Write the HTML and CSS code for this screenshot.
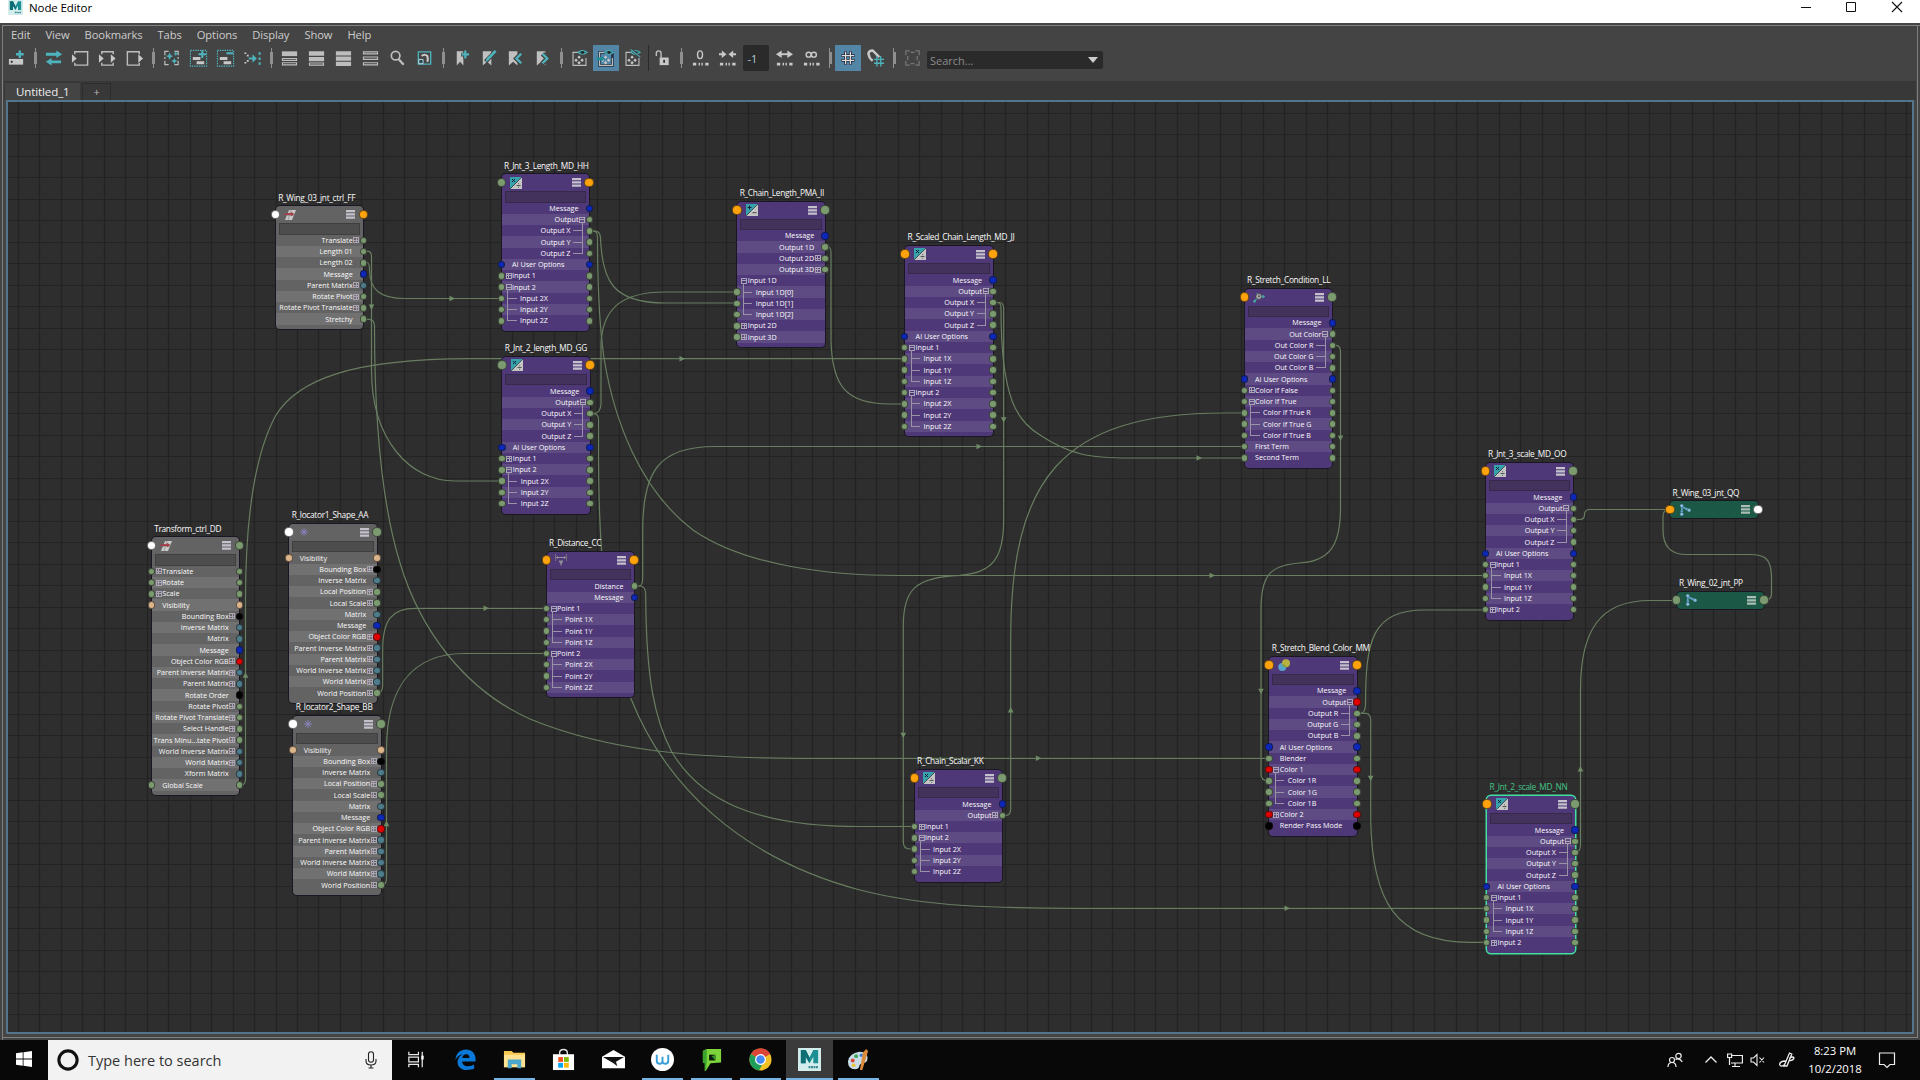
FILE: index.html
```html
<!DOCTYPE html>
<html lang="en">
<head>
<meta charset="utf-8">
<title>Node Editor</title>
<link rel="stylesheet" href="styles.css">
</head>
<body>
<svg class="defs" width="0" height="0" aria-hidden="true">
  <defs>
    <symbol id="n-md" viewBox="0 0 12 12"><path d="M0 0H12V12H0z" fill="#c4c4c4"/><path d="M0 0H12L0 12z" fill="#36a3ac"/><path d="M12 0L0 12" stroke="#333" stroke-width=".8"/><path d="M2 2l3 3M5 2L2 5" stroke="#123" stroke-width="1"/><path d="M6.5 8.5h4M8.6 6.3v.9M8.6 9.8v.9" stroke="#555" stroke-width="1"/></symbol>
    <symbol id="n-pma" viewBox="0 0 12 12"><path d="M0 0H12V12H0z" fill="#c4c4c4"/><path d="M0 0H12L0 12z" fill="#36a3ac"/><path d="M12 0L0 12" stroke="#333" stroke-width=".8"/><path d="M1.5 3.5h4M3.5 1.5v4" stroke="#123" stroke-width="1"/><path d="M6.5 8.7h4" stroke="#444" stroke-width="1"/></symbol>
    <symbol id="n-xf" viewBox="0 0 12 12"><path d="M5 1h7L8 11H1z" fill="#c9c9c9"/><path d="M7 1l-3 10M2.8 6.5h7" stroke="#8a8a8a" stroke-width=".7"/><path d="M0 5l4-1 3 .2V2.8L10.5 5 7 7.3V6L0 6z" fill="#a63c46"/></symbol>
    <symbol id="n-loc" viewBox="0 0 12 12"><path d="M6 2v8M2 6h8M3.2 3.2l5.6 5.6M8.8 3.2L3.2 8.8" stroke="#8c86c4" stroke-width=".9"/></symbol>
    <symbol id="n-dist" viewBox="0 0 12 12"><path d="M.5 0v7M11.500 0v7" stroke="#777" stroke-width=".9"/><path d="M1.500 3.500h9" stroke="#aaa" stroke-width=".8"/><path d="M1 3.500l2-1.500v3zM11 3.500l-2-1.500v3z" fill="#999"/><path d="M4 6.500h4v2H7l-.5 3h-1L5 8.500H4z" fill="#8d8d95"/></symbol>
    <symbol id="n-cond" viewBox="0 0 12 12"><path d="M1 11L5 6 4 2M5.500 6l6-.5" stroke="#4b9c9f" stroke-width="1.300" fill="none"/><circle cx="5.800" cy="5.500" r="2.900" fill="#a9a9ae" stroke="#333" stroke-width=".6"/><circle cx="6" cy="5.300" r="1" fill="#555"/><circle cx="1.500" cy="10.300" r="1.300" fill="#4aa"/><path d="M9.500 3.500l2.500 2-2.500 2z" fill="#4aa"/></symbol>
    <symbol id="n-blend" viewBox="0 0 12 12"><circle cx="4.300" cy="8" r="4" fill="#56a3cc"/><circle cx="8" cy="4.200" r="4" fill="#b9b240"/><path d="M4.200 5.200a4 4 0 0 1 4 3.200 4 4 0 0 1-4-3.200z" fill="#7d9a4c"/></symbol>
    <symbol id="n-joint" viewBox="0 0 13 13"><path d="M3 2v9M3 3l8 4" stroke="#5f9fc0" stroke-width="1.800"/><path d="M3 4l-1.500 5h3zM4 3l5 4.300L10 5z" fill="#5f9fc0"/><g fill="#8fc2e0" stroke="#2b5a72" stroke-width=".5"><circle cx="3" cy="2" r="1.900"/><circle cx="3" cy="11" r="1.900"/><circle cx="11" cy="6.800" r="1.900"/></g></symbol>
    <symbol id="n-bars" viewBox="0 0 9 9"><path d="M0 0h9v2.300H0zM0 3.300h9v2.300H0zM0 6.600h9v2.200H0z" fill="currentColor"/></symbol>
    <symbol id="i-eyebox" viewBox="0 0 22 22"><path d="M12 4.500H3.500V19.500H18.500V11" fill="none" stroke="#bdbdbd" stroke-width="1.300"/><path d="M10.500 8l2 2-2 2-2-2zM7 11.500l2 2-2 2-2-2zM14 11.500l2 2-2 2-2-2zM10.500 14.500l2 2-2 2-2-2z" fill="#c8c8c8"/><path d="M9 4.500Q14 0 20 4.500Q14 9 9 4.500z" fill="#2f6f76" stroke="#4fb0b8" stroke-width="1.200"/><circle cx="14.500" cy="4.500" r="1.700" fill="#222"/></symbol>
    <symbol id="i-dots" viewBox="0 0 20 20"><path d="M2 16.500h3.500M8 16.500h1.500M11 16.500h1.500M15 16.500h3.500" stroke="#c8c8c8" stroke-width="3"/></symbol>
    <symbol id="i-maya" viewBox="0 0 24 24"><path d="M0 0H24V24H0z" fill="#d3ecec"/><path d="M3 2h5l4 8 4-8h5v14h-5V9l-4 7-4-7v7H3z" fill="#1b8f93"/><path d="M3 2h5l4 8v6L8 9v7H3z" fill="#0f6d74"/><path d="M11 20h10" stroke="#3a8b90" stroke-width="2.500" stroke-dasharray="2 .6"/></symbol>
  </defs>
</svg>

<header class="titlebar">
  <svg class="titlebar-logo" viewBox="0 0 24 24"><use href="#i-maya"/></svg>
  <span class="titlebar-text">Node Editor</span>
  <div class="window-buttons">
    <svg viewBox="0 0 12 12"><path d="M1 6.500h10" stroke="#111"/></svg>
    <svg viewBox="0 0 12 12"><path d="M1.500 1.500h9v9h-9z" fill="none" stroke="#111"/></svg>
    <svg viewBox="0 0 12 12"><path d="M1 1l10 10M11 1L1 11" stroke="#111" stroke-width="1.100"/></svg>
  </div>
</header>

<main class="window">
  <nav class="menubar"><span>Edit</span><span>View</span><span>Bookmarks</span><span>Tabs</span><span>Options</span><span>Display</span><span>Show</span><span>Help</span></nav>

  <div class="toolbar">
    <svg class="tool" viewBox="0 0 20 20"><path d="M2 11h15v6H2z" fill="#c8c8c8"/><circle cx="5" cy="14" r="1.200" fill="#333"/><path d="M13.500 1.500v9M9 6h9" stroke="#444" stroke-width="4.500"/><path d="M13.500 2v8M9.500 6h8" stroke="#4db3bd" stroke-width="2.500"/></svg>
    <i class="sep"></i>
    <svg class="tool" viewBox="0 0 20 20"><path d="M2 4.500h11V2l6 4-6 4V7.500H2zM18 12.500H8V10l-6 4 6 4v-2.500h10z" fill="#4db3bd"/></svg>
    <svg class="tool" viewBox="0 0 20 20"><path d="M4 6V3.500H17.500V17.500H4V15" fill="none" stroke="#bdbdbd" stroke-width="1.500"/><path d="M1 6l5 4.500L1 15z" fill="#c8c8c8"/></svg>
    <svg class="tool" viewBox="0 0 20 20"><path d="M4 6V3.500H16V6M4 15v2.500H16V15" fill="none" stroke="#bdbdbd" stroke-width="1.500"/><path d="M1 6l5 4.500L1 15zM13.500 6l5 4.500-5 4.500z" fill="#c8c8c8"/></svg>
    <svg class="tool" viewBox="0 0 20 20"><path d="M15 6V3.500H2.500V17.500H15V15" fill="none" stroke="#bdbdbd" stroke-width="1.500"/><path d="M14 6l5 4.500-5 4.500z" fill="#c8c8c8"/></svg>
    <i class="sep"></i>
    <svg class="tool" viewBox="0 0 20 20"><path d="M7 3H3V7M13 3h4v4M3 13v4h4M17 13v4h-4M3 9v2M17 9v2" fill="none" stroke="#bdbdbd" stroke-width="1.300"/><path d="M8 4l1.200 3L12 8 9.200 9.200 8 12 6.800 9.200 4 8l2.800-1zM13 10l1 2.200 2.200 1-2.200 1L13 16.500l-1-2.300-2.200-1 2.200-1zM14.500 3l.8 1.700 1.700.8-1.700.8-.8 1.700-.8-1.700L12 5.500l1.700-.8z" fill="#4db3bd"/></svg>
    <svg class="tool" viewBox="0 0 20 20"><path d="M1.500 2H18.500V18.500H1.500z" fill="none" stroke="#4db3bd" stroke-width="1.200" stroke-dasharray="1.500 1"/><path d="M4 9h8v3H4zM8 13.500h8v3H8z" fill="#c8c8c8"/><path d="M14 2v8M10 6h8" stroke="#4db3bd" stroke-width="2.200"/></svg>
    <svg class="tool" viewBox="0 0 20 20"><path d="M1.500 2H18.500V18.500H1.500z" fill="none" stroke="#4db3bd" stroke-width="1.200" stroke-dasharray="1.500 1"/><path d="M4 9h8v3H4zM8 13.500h8v3H8z" fill="#c8c8c8"/><path d="M11 5h7" stroke="#4db3bd" stroke-width="2.200"/></svg>
    <svg class="tool" viewBox="0 0 20 20"><path d="M1.500 5h2M1.500 15h2M4 7.500h2M4 13h2" stroke="#c8c8c8" stroke-width="1.700"/><path d="M6 10.500h7" stroke="#4db3bd" stroke-width="2"/><path d="M10 6l4.500 4.500L10 15z" fill="#4db3bd"/><path d="M17.500 4v2.500M17.500 9.500V12M17.500 14.500V17" stroke="#4db3bd" stroke-width="2.200"/></svg>
    <i class="sep"></i>
    <svg class="tool" viewBox="0 0 20 20"><path d="M2 3h16v5H2z" fill="#bdbdbd"/><path d="M2.600 10.500h14.800v2H2.600zM2.600 15h14.800v2.300H2.600z" fill="none" stroke="#bdbdbd" stroke-width="1.200"/></svg>
    <svg class="tool" viewBox="0 0 20 20"><path d="M2 3h16v4.500H2zM2 9h16v4.500H2z" fill="#bdbdbd"/><path d="M2.600 15.300h14.800v2.200H2.600z" fill="none" stroke="#bdbdbd" stroke-width="1.200"/></svg>
    <svg class="tool" viewBox="0 0 20 20"><path d="M2 3h16v4.300H2zM2 8.500h16v4.300H2zM2 14h16v4.300H2z" fill="#bdbdbd"/></svg>
    <svg class="tool" viewBox="0 0 20 20"><path d="M2.600 3.600h14.800v2H2.600zM2.600 9h14.800v2.500H2.600zM2.600 15h14.800v2.300H2.600z" fill="none" stroke="#bdbdbd" stroke-width="1.200"/></svg>
    <svg class="tool" viewBox="0 0 20 20"><circle cx="8" cy="7.500" r="4.500" fill="none" stroke="#bdbdbd" stroke-width="1.800"/><path d="M11 11l5.500 6" stroke="#bdbdbd" stroke-width="2.400"/></svg>
    <svg class="tool" viewBox="0 0 20 20"><path d="M3.500 3.500h13v13h-13z" fill="none" stroke="#4db3bd" stroke-width="1.400"/><path d="M4 11.500h4.500V16H4z" fill="#2b4a4d" stroke="#bde" stroke-width="1"/><path d="M7 8q3-3 6 0 1 3 0 6" fill="none" stroke="#c8c8c8" stroke-width="2.200"/></svg>
    <i class="sep"></i>
    <svg class="tool" viewBox="0 0 20 20"><path d="M5 3h7v15l-3.500-4L5 18z" fill="#c0c0c0"/><path d="M14 2v9M9.500 6.500h9" stroke="#444" stroke-width="4"/><path d="M14 2v8.500M10 6.200h8" stroke="#4db3bd" stroke-width="2.300"/></svg>
    <svg class="tool" viewBox="0 0 20 20"><path d="M4 3h9v15l-4.500-4L4 18z" fill="#c0c0c0"/><path d="M17.500 2.500L7 14" stroke="#444" stroke-width="4.500"/><path d="M17.500 2.500L8.500 12" stroke="#4db3bd" stroke-width="2.800"/><path d="M8 11l2 2-3.500 1.500z" fill="#4db3bd"/></svg>
    <svg class="tool" viewBox="0 0 20 20"><path d="M3 3h9v15l-4.500-4L3 18z" fill="#c0c0c0"/><path d="M16 5.500l-5 5 5 5" fill="none" stroke="#444" stroke-width="5"/><path d="M16 5.500l-5 5 5 5" fill="none" stroke="#4db3bd" stroke-width="2.500"/></svg>
    <svg class="tool" viewBox="0 0 20 20"><path d="M4 3h9v15l-4.500-4L4 18z" fill="#c0c0c0"/><path d="M10 5.500l5 5-5 5" fill="none" stroke="#444" stroke-width="5"/><path d="M10 5.500l5 5-5 5" fill="none" stroke="#4db3bd" stroke-width="2.500"/></svg>
    <i class="sep"></i>
    <svg class="tool" viewBox="0 0 22 22"><use href="#i-eyebox"/></svg>
    <svg class="tool tool-on" viewBox="0 0 22 22"><path d="M3.500 4.500h15v15h-15z" fill="none" stroke="#234" stroke-width="3"/><use href="#i-eyebox"/><path d="M0 12h8" stroke="#1d8e96" stroke-width="3"/><circle cx="6" cy="12" r="2.500" fill="#1d8e96"/></svg>
    <svg class="tool" viewBox="0 0 22 22"><use href="#i-eyebox"/><path d="M9 0l10 9" stroke="#444" stroke-width="2.500"/><path d="M9 1l11 9" stroke="#4db3bd" stroke-width="1.200"/></svg>
    <i class="sep-thin"></i>
    <svg class="tool" viewBox="0 0 20 20"><path d="M3.500 8V5q0-2.500 2.500-2.500T8.500 5v5" fill="none" stroke="#bdbdbd" stroke-width="1.500"/><path d="M7 9.500h9.500v8H7z" fill="#c8c8c8"/><path d="M11.700 12v3" stroke="#333" stroke-width="2"/></svg>
    <i class="sep sep-wide"></i>
    <svg class="tool" viewBox="0 0 20 20"><ellipse cx="9.500" cy="6.500" rx="2.600" ry="4" fill="none" stroke="#c8c8c8" stroke-width="1.500"/><use href="#i-dots"/></svg>
    <svg class="tool" viewBox="0 0 20 20"><path d="M1 6h4M15 6h4" stroke="#c8c8c8" stroke-width="2"/><path d="M4 2l5 4-5 4zM16 2l-5 4 5 4z" fill="#c8c8c8"/><use href="#i-dots"/></svg>
    <span class="depth">-1</span>
    <svg class="tool" viewBox="0 0 20 20"><path d="M5 6h10" stroke="#c8c8c8" stroke-width="2"/><path d="M7 2L1 6l6 4zM13 2l6 4-6 4z" fill="#c8c8c8"/><use href="#i-dots"/></svg>
    <svg class="tool" viewBox="0 0 20 20"><circle cx="7" cy="6.500" r="2.600" fill="none" stroke="#c8c8c8" stroke-width="1.500"/><circle cx="12.500" cy="6.500" r="2.600" fill="none" stroke="#c8c8c8" stroke-width="1.500"/><use href="#i-dots"/></svg>
    <i class="sep"></i>
    <svg class="tool tool-on" viewBox="0 0 20 20"><path d="M7.500 3v14M12.500 3v14M3 7.500h14M3 12.500h14" stroke="#223" stroke-width="2.800"/><path d="M7.500 3.500v13M12.500 3.500v13M3.500 7.500h13M3.500 12.500h13" stroke="#ddd" stroke-width="1.300"/></svg>
    <svg class="tool tool-snap" viewBox="0 0 20 20"><path d="M4 10L2.500 5.500Q3 2 7 2l7 7M4 10l3 3" fill="none" stroke="#c8c8c8" stroke-width="2.600"/><path d="M11.500 8v11M15.500 8v11M8.500 11.500H19M8.500 15.500H19" stroke="#4db3bd" stroke-width="1.400"/></svg>
    <i class="sep"></i>
    <svg class="tool" viewBox="0 0 20 20"><path d="M7 2.500H3V7M13 2.500h4V7M3 13v4.500h4M17 13v4.500h-4M5 8v4M15 8v4M8 4h4M8 16h4" fill="none" stroke="#777" stroke-width="1.300"/></svg>
    <div class="search"><span>Search...</span><i class="caret"></i></div>
  </div>

  <div class="tabs"><span class="tab tab-active">Untitled_1</span><span class="tab tab-add">+</span></div>

  <section class="canvas" id="canvas">
    <svg class="wires" id="wires" viewBox="8 102 1906 930"></svg>
  </section>
</main>

<footer class="taskbar">
  <span class="task start"><svg viewBox="0 0 16 16"><path d="M0 2.200L6.700 1.300V7.600H0zM7.500 1.200L16 0V7.600H7.500zM0 8.400H6.700V14.700L0 13.800zM7.500 8.400H16V16L7.500 14.800z" fill="#fff"/></svg></span>
  <div class="cortana">
    <svg class="cortana-ring" viewBox="0 0 20 20"><circle cx="10" cy="10" r="8.300" fill="none" stroke="#111" stroke-width="2.800"/></svg>
    <span>Type here to search</span>
    <svg class="cortana-mic" viewBox="0 0 12 18"><rect x="3.500" y=".7" width="5" height="10.500" rx="2.500" fill="none" stroke="#222" stroke-width="1.100"/><path d="M1 8v2q0 4 5 4t5-4V8M6 14v3M3.500 17h5" fill="none" stroke="#222" stroke-width="1.100"/></svg>
  </div>
  <span class="task"><svg viewBox="0 0 24 24"><path d="M4 4v3h10V4M4 20v-3h10v3M4 9.500h10v5H4zM18 4v16" fill="none" stroke="#e8e8e8" stroke-width="1.300"/><path d="M17 8h2.500v4H17z" fill="#fff"/></svg></span>
  <span class="task"><svg viewBox="0 0 24 24"><path d="M1.500 12.500C2 5 7 1.500 12.500 1.500 19 1.500 22.500 6 22.500 11.500V14H8.500c.3 3.500 3 5 6.300 5 2.400 0 4.500-.6 6.200-1.700v4.200c-2 1-4.500 1.500-7.200 1.500C7 23 3.200 19 3.800 13.500 4.200 10 6.500 7.500 9.500 6.500 6 6.800 3 9 1.500 12.500zM8.700 10.500h7.500C16.200 8 15 6.500 12.700 6.500 10.500 6.500 9 8 8.700 10.500z" fill="#0a78d7"/></svg></span>
  <span class="task task-run"><svg viewBox="0 0 24 24"><path d="M1 3h8l2 2h12v15H1z" fill="#f5c94f"/><path d="M1 7h22v13H1z" fill="#fde391"/><path d="M5 12h14v9h-4v-4H9v4H5z" fill="#4aa8cf"/></svg></span>
  <span class="task"><svg viewBox="0 0 24 24"><path d="M8 7V5q0-3.500 4-3.500T16 5v2" fill="none" stroke="#ddd" stroke-width="1.500"/><path d="M1 6.500h22V23H1z" fill="#fff"/><path d="M6.500 9.500h5v5h-5z" fill="#f25022"/><path d="M12.500 9.500h5v5h-5z" fill="#7fba00"/><path d="M6.500 15.500h5v5h-5z" fill="#00a4ef"/><path d="M12.500 15.500h5v5h-5z" fill="#ffb900"/></svg></span>
  <span class="task"><svg viewBox="0 0 24 24"><path d="M0 9L12 2l12 7v12H0z" fill="#fff"/><path d="M1 9.500h22L12 16z" fill="#111"/><path d="M12 16l4 3-1.500-5z" fill="#111"/></svg></span>
  <span class="task task-run"><svg viewBox="0 0 24 24"><circle cx="12" cy="12" r="12" fill="#fff"/><path d="M6 7v6q0 3.500 3 3.500t3-3V9M12 13.500q0 3 3 3t3-3.500V7" fill="none" stroke="#3a9fd8" stroke-width="2"/></svg></span>
  <span class="task task-run"><svg viewBox="0 0 24 24"><path d="M3 3L7 1H22v14l-11 1-5 8H5V16L3 15z" fill="#7ed33a"/><path d="M3 3l4-2v14l-1 9H5v-8l-2-1z" fill="#3aa42e"/><path d="M9.500 7h6.500v6H9.500z" fill="#0b1a0b"/><path d="M12 8.500l4-1.500v6z" fill="#2f8f2a"/></svg></span>
  <span class="task task-run"><svg viewBox="0 0 24 24"><circle cx="12" cy="12" r="11.500" fill="#f2bf26"/><path d="M12 12L2 6.300A11.500 11.500 0 0 1 22 6.300z" fill="#dc4437"/><path d="M12 12L2 6.300A11.500 11.500 0 0 0 10.500 23.400l4.700-9z" fill="#1e9e58"/><path d="M12 6.300h10A11.500 11.500 0 0 0 12 .5z" fill="#dc4437"/><circle cx="12" cy="12" r="5.700" fill="#fff"/><circle cx="12" cy="12" r="4.400" fill="#4587f3"/></svg></span>
  <span class="task task-run task-active"><svg viewBox="0 0 24 24"><use href="#i-maya"/></svg></span>
  <span class="task task-run"><svg viewBox="0 0 24 24"><path d="M13 4Q2 6 1 14q0 9 9 8 3-1 3-4 1-2 4-2 6-2 4-8-2-4-8-4z" fill="#c9dce8"/><circle cx="6" cy="13" r="2" fill="#d9442f"/><circle cx="9.500" cy="8.500" r="2" fill="#3aa655"/><circle cx="15" cy="7.500" r="1.800" fill="#3a7bd5"/><circle cx="7" cy="18" r="1.900" fill="#efc431"/><path d="M20 1l2 2-6 20h-2.500l3-18z" fill="#d98a3a"/></svg></span>
  <div class="tray">
    <svg viewBox="0 0 16 16"><g fill="none" stroke="#eee" stroke-width="1.200"><circle cx="11.500" cy="4" r="2.700"/><path d="M8.500 7.500Q12.500 5.500 15.300 10"/><circle cx="5" cy="8" r="2.500"/><path d="M1 15q0-4.500 4-4.500T9 15"/></g></svg>
    <svg class="tray-chevron" viewBox="0 0 16 16"><path d="M2.500 10.500L8 5l5.500 5.500" fill="none" stroke="#eee" stroke-width="1.300"/></svg>
    <svg viewBox="0 0 16 16"><path d="M4 3.500h11.400v7.500H4M8 11v3M5 14.500h8" fill="none" stroke="#eee" stroke-width="1.200"/><path d="M.6 2h4v3.500h-4zM2.500 5.500V13" fill="none" stroke="#eee" stroke-width="1.200"/></svg>
    <svg class="tray-volume" viewBox="0 0 16 16"><path d="M1 6h2.500L7 2.500v11L3.500 10H1zM9.500 5.500l4.500 5M14 5.500l-4.500 5" fill="none" stroke="#eee" stroke-width="1.100"/></svg>
    <svg class="tray-pen" viewBox="0 0 16 16"><path d="M5 14L10.500 1l2.300 1L8 14zM10 6q5-2 5 0-1 3-5 2.500M6.500 9Q1 9 .6 12.500 2 15.500 5 13" fill="none" stroke="#eee" stroke-width="1.300"/></svg>
    <div class="clock"><span>8:23 PM</span><span>10/2/2018</span></div>
    <svg class="tray-note" viewBox="0 0 18 18"><path d="M1.500 2h15v11.500H12L9 16.500l-3-3H1.500z" fill="none" stroke="#eee" stroke-width="1.200"/></svg>
  </div>
</footer>
<script src="app.js"></script>
</body>
</html>
```
FILE: styles.css
```css
* { box-sizing: border-box; }
body {
  margin: 0;
  width: 1920px;
  height: 1080px;
  overflow: hidden;
  display: flex;
  flex-direction: column;
  background: #444;
  font-family: "Open Sans", "Noto Sans", sans-serif;
}
.defs { position: absolute; }

.titlebar {
  height: 23px;
  flex: none;
  display: flex;
  align-items: flex-start;
  background: #fff;
  padding-left: 8px;
}
.titlebar-logo { width: 15px; height: 15px; }
.titlebar-text { margin-left: 6px; font-size: 11.500px; line-height: 16px; letter-spacing: -.1px; color: #000; }
.window-buttons { margin-left: auto; display: flex; gap: 33.500px; padding: 1px 17.500px 0 0; }
.window-buttons svg { width: 12px; height: 12px; }

.window {
  height: 1017px;
  flex: none;
  display: flex;
  flex-direction: column;
  background: #444;
  padding: 4px 4px 0 3px;
  box-shadow: inset 2px 2px #444, inset 3px 3px #808080, inset -2px -2px #444, inset -3px -3px #808080;
}
.menubar {
  height: 18px;
  display: flex;
  gap: 15px;
  padding-left: 8px;
  font-size: 11.200px;
  letter-spacing: -.1px;
  line-height: 16px;
  color: #ccc;
}
.toolbar { height: 36px; display: flex; align-items: center; padding-bottom: 10px; }
.tool { flex: none; width: 27px; height: 26px; padding: 3.500px; overflow: visible; }
.tool-on { width: 26px; background: #5285a6; }
.tool-snap { margin-left: 1px; }
.sep, .sep-thin { flex: none; position: relative; width: 10px; height: 20px; }
.sep::before, .sep::after { content: ""; position: absolute; left: 4.500px; top: 0; width: 1px; height: 20px; background: #909090; }
.sep::after { left: 4px; width: 3px; top: 4px; height: 12px; }
.sep-wide { width: 11px; }
.sep-thin { width: 3px; height: 26px; }
.sep-thin::before { content: ""; position: absolute; right: 0; top: 0; width: 1px; height: 26px; background: #2a2a2a; }
.sep-thin::after { content: none; }
.depth {
  width: 26px;
  height: 26px;
  margin: 0 2px 0 1.500px;
  padding-left: 5px;
  background: #2a2a2a;
  border-radius: 2px;
  color: #b9cdd8;
  font-size: 11px;
  line-height: 27px;
}
.search {
  display: flex;
  align-items: center;
  justify-content: space-between;
  width: 176px;
  height: 18px;
  margin: 4px 0 0 1.500px;
  padding: 0 5px 0 3px;
  background: #2a2a2a;
  border-radius: 2px;
  color: #8c8c8c;
  font-size: 11px;
}
.caret { border: 5px solid transparent; border-top: 6px solid #ccc; border-bottom: 0; }

.tabs { height: 19px; display: flex; align-items: flex-end; gap: 2px; margin-left: 1px; padding-left: 1px; background: #383838; }
.tab { height: 17px; font-size: 11.500px; letter-spacing: -.1px; line-height: 17px; color: #eee; }
.tab-active { width: 75px; padding-left: 11px; background: #444; }
.tab-add { width: 29px; text-align: center; font-size: 11px; border: 1px solid #2c2c2c; border-bottom: 0; line-height: 15px; color: #bbb; }

.canvas {
  position: relative;
  width: 1908px;
  height: 934px;
  margin-left: 3px;
  border: 2px solid #54748b;
  background: #2e2e2e;
  overflow: hidden;
}
.wires { display: block; width: 1906px; height: 930px; }
.grid-line { fill: none; stroke: #232323; stroke-width: 1.200; }
.wire { fill: none; stroke: #687d60; stroke-width: 1.200; }
.arrow { fill: #6f8b66; }

/* Nodes are placed freely on the canvas */
.node {
  position: absolute;
  width: 87.500px;
  padding-bottom: 4.500px;
  border-radius: 4px;
  background: var(--dark);
  box-shadow: 0 0 0 1px #1b1722;
  color: #fafafa;
}
.node-purple { --dark: #4f3878; --light: #5e4b84; --field: #43325b; }
.node-gray { --dark: #636363; --light: #717171; --field: #4d4d4d; }
.node-green { --dark: #1b5846; --light: #1b5846; --field: #1b5846; padding-bottom: 0; }
.node-selected { box-shadow: 0 0 0 1.500px #3fe0a0; }
.node-title {
  position: absolute;
  left: 2.500px;
  top: -14.500px;
  font-size: 8.300px;
  letter-spacing: -.3px;
  line-height: 12px;
  white-space: nowrap;
}
.node-selected .node-title { color: #43c487; }
.node-head { position: relative; display: flex; align-items: center; justify-content: space-between; height: 17px; padding: 0 8px 0 8.500px; }
.node-icon { width: 12px; height: 12px; }
.node-bars { width: 9px; height: 9px; color: #c4c0cc; }
.node-green .node-bars { color: #a9bdb5; }
.node-field { height: 11.500px; margin: 0 3px .2px; background: var(--field); border: 1px solid rgba(0, 0, 0, .18); }
.row {
  position: relative;
  display: flex;
  align-items: center;
  height: 11.260px;
  padding: 0 10.500px;
  font-size: 7.200px;
  line-height: 11px;
  white-space: nowrap;
}
.row:nth-child(even) { background: var(--light); }
.row:nth-child(odd) { background: var(--dark); }
.row-out { justify-content: flex-end; }
.row-out.row-child { padding-right: 18.500px; }
.row-in.row-child { padding-left: 18.500px; }
.row-child::before { content: ""; position: absolute; bottom: 5px; width: 8.500px; height: 11px; border-bottom: 1px solid #9a93a6; }
.row-in.row-child::before { left: 5.500px; border-left: 1px solid #9a93a6; }
.row-out.row-child::before { right: 6.500px; border-right: 1px solid #9a93a6; }
.row-first::before { height: 8.500px; }
.box { position: absolute; top: 2.700px; width: 6px; height: 6px; border: 1px solid #aaa4b4; }
.box::before { content: ""; position: absolute; left: 0; top: 1.500px; width: 4px; height: 1px; background: #aaa4b4; }
.box-plus::after { content: ""; position: absolute; left: 1.500px; top: 0; width: 1px; height: 4px; background: #aaa4b4; }
.row-in .box { left: 4px; }
.row-out .box { right: 4px; }
.port {
  position: absolute;
  top: calc(50% - 3.700px);
  width: 7.400px;
  height: 7.400px;
  border-radius: 50%;
  border: .8px solid rgba(20, 20, 20, .6);
}
.port-l { left: -4px; }
.port-r { right: -4px; }
.port-big { width: 9.600px; height: 9.600px; top: calc(50% - 4.800px); }
.port-big.port-l { left: -5px; }
.port-big.port-r { right: -5px; }
.c-g { background: #7b9a70; }
.c-o { background: #ffa30c; }
.c-w { background: #fff; }
.c-b { background: #0d28b8; }
.c-t { background: #4e7c8a; }
.c-k { background: #000; }
.c-r { background: #e00000; }
.c-n { background: #dcb48c; }

.taskbar { flex: none; height: 40px; display: flex; align-items: stretch; background: #080808; color: #fff; }
.task { width: 49.150px; display: flex; align-items: center; justify-content: center; border-bottom: 2px solid transparent; }
.task svg { width: 23px; height: 23px; }
.start { width: 48px; }
.start svg { width: 16px; height: 16px; }
.task-run { width: 41px; margin: 0 4.075px; border-color: #76b4e6; }
.task-active { width: 47px; margin: 0 1.075px; background: #3b3b3b; }
.cortana { width: 344px; display: flex; align-items: center; background: #f2f2f2; color: #333; font-size: 14.500px; padding: 0 15px 0 9px; }
.cortana-ring { width: 22px; height: 22px; margin-right: 9px; }
.cortana-mic { width: 12px; height: 18px; margin-left: auto; }
.tray { margin-left: auto; display: flex; align-items: center; padding-right: 24px; }
.tray svg { width: 16px; height: 16px; }
.tray svg + svg { margin-left: 7px; }
.tray .tray-chevron { margin: 0 1px 0 20px; }
.tray .tray-pen { margin-left: 13px; }
.clock { width: 64px; margin: 0 11px 0 8px; display: flex; flex-direction: column; align-items: center; font-size: 11.300px; line-height: 18px; }
.tray .tray-note { width: 18px; height: 18px; }
```
FILE: app.js
```js
// Row format: kind, label, toggle, left port, right port.
// kind: o = output, i = input, O/I = child output/input; toggle: + - or .
const MD_OUT = ['o Message . . b', 'o Output - . g', 'O Output_X . . g', 'O Output_Y . . g', 'O Output_Z . . g', 'i AI_User_Options . b b'];
const IN = n => [`i Input_${n} - g g`, `I Input_${n}X . g g`, `I Input_${n}Y . g g`, `I Input_${n}Z . g g`];
const LOCATOR = ['i Visibility . n n', 'o Bounding_Box + . k', 'o Inverse_Matrix . . t', 'o Local_Position + . g', 'o Local_Scale + . g', 'o Matrix . . t', 'o Message . . b', 'o Object_Color_RGB + . r', 'o Parent_Inverse_Matrix + . t', 'o Parent_Matrix + . t', 'o World_Inverse_Matrix + . t', 'o World_Matrix + . t', 'o World_Position + . g'];

const NODES = [
  { title: 'R_Wing_03_jnt_ctrl_FF', x: 275.700, y: 206, kind: 'gray', icon: 'xf', l: 'w', r: 'o', rows: ['o Translate + . g', 'o Length_01 . . g', 'o Length_02 . . g', 'o Message . . b', 'o Parent_Matrix + . t', 'o Rotate_Pivot + . g', 'o Rotate_Pivot_Translate + . g', 'o Stretchy . . g'] },
  { title: 'R_Jnt_3_Length_MD_HH', x: 501.500, y: 174, kind: 'purple', icon: 'md', l: 'g', r: 'o', rows: [...MD_OUT, 'i Input_1 + g g', ...IN(2)] },
  { title: 'R_Jnt_2_length_MD_GG', x: 502.300, y: 356.800, kind: 'purple', icon: 'md', l: 'g', r: 'o', rows: [...MD_OUT, 'i Input_1 + g g', ...IN(2)] },
  { title: 'R_Chain_Length_PMA_II', x: 737.200, y: 201.500, kind: 'purple', icon: 'pma', l: 'o', r: 'g', rows: ['o Message . . b', 'o Output_1D . . g', 'o Output_2D + . g', 'o Output_3D + . g', 'i Input_1D - . .', 'I Input_1D[0] . g .', 'I Input_1D[1] . g .', 'I Input_1D[2] . g .', 'i Input_2D + g .', 'i Input_3D + g .'] },
  { title: 'R_Scaled_Chain_Length_MD_JJ', x: 905.100, y: 245.800, kind: 'purple', icon: 'md', l: 'o', r: 'o', rows: [...MD_OUT, ...IN(1), ...IN(2)] },
  { title: 'R_Stretch_Condition_LL', x: 1244.500, y: 288.500, kind: 'purple', icon: 'cond', l: 'o', r: 'g', rows: ['o Message . . b', 'o Out_Color - . g', 'O Out_Color_R . . g', 'O Out_Color_G . . g', 'O Out_Color_B . . g', 'i AI_User_Options . b b', 'i Color_If_False + g g', 'i Color_If_True - g g', 'I Color_If_True_R . g g', 'I Color_If_True_G . g g', 'I Color_If_True_B . g g', 'i First_Term . g g', 'i Second_Term . g g'] },
  { title: 'R_Stretch_Blend_Color_MM', x: 1269.300, y: 656.500, kind: 'purple', icon: 'blend', l: 'o', r: 'o', rows: ['o Message . . b', 'o Output - . r', 'O Output_R . . g', 'O Output_G . . g', 'O Output_B . . g', 'i AI_User_Options . b b', 'i Blender . g g', 'i Color_1 - r r', 'I Color_1R . g g', 'I Color_1G . g g', 'I Color_1B . g g', 'i Color_2 + r r', 'i Render_Pass_Mode . k k'] },
  { title: 'R_Jnt_3_scale_MD_OO', x: 1485.500, y: 462.700, kind: 'purple', icon: 'md', l: 'o', r: 'g', rows: [...MD_OUT, ...IN(1), 'i Input_2 + g g'] },
  { title: 'R_Jnt_2_scale_MD_NN', x: 1487, y: 795.700, kind: 'purple', icon: 'md', l: 'o', r: 'g', selected: true, rows: [...MD_OUT, ...IN(1), 'i Input_2 + g g'] },
  { title: 'R_Wing_03_jnt_QQ', x: 1670, y: 501, kind: 'green', icon: 'joint', l: 'o', r: 'w' },
  { title: 'R_Wing_02_jnt_PP', x: 1676.500, y: 591.500, kind: 'green', icon: 'joint', l: 'g', r: 'g' },
  { title: 'R_Distance_CC', x: 546.500, y: 551.700, kind: 'purple', icon: 'dist', l: 'o', r: 'o', rows: ['o Distance . . g', 'o Message . . b', 'i Point_1 - g .', 'I Point_1X . g .', 'I Point_1Y . g .', 'I Point_1Z . g .', 'i Point_2 - g .', 'I Point_2X . g .', 'I Point_2Y . g .', 'I Point_2Z . g .'] },
  { title: 'R_Chain_Scalar_KK', x: 914.500, y: 769.800, kind: 'purple', icon: 'md', l: 'o', r: 'g', rows: ['o Message . . b', 'o Output + . g', 'i Input_1 + g .', 'i Input_2 - g .', 'I Input_2X . g .', 'I Input_2Y . g .', 'I Input_2Z . g .'] },
  { title: 'Transform_ctrl_DD', x: 151.700, y: 537, kind: 'gray', icon: 'xf', l: 'w', r: 'g', rows: ['i Translate + g g', 'i Rotate + g g', 'i Scale + g g', 'i Visibility . n n', 'o Bounding_Box + . k', 'o Inverse_Matrix . . t', 'o Matrix . . t', 'o Message . . b', 'o Object_Color_RGB + . r', 'o Parent_Inverse_Matrix + . t', 'o Parent_Matrix + . t', 'o Rotate_Order . . k', 'o Rotate_Pivot + . g', 'o Rotate_Pivot_Translate + . g', 'o Select_Handle + . g', 'o Trans_Minu...tate_Pivot + . g', 'o World_Inverse_Matrix + . t', 'o World_Matrix + . t', 'o Xform_Matrix . . t', 'i Global_Scale . g g'] },
  { title: 'R_locator1_Shape_AA', x: 289.200, y: 523.800, kind: 'gray', icon: 'loc', l: 'w', r: 'g', rows: LOCATOR },
  { title: 'R_locator2_Shape_BB', x: 293.200, y: 715.800, kind: 'gray', icon: 'loc', l: 'w', r: 'g', rows: LOCATOR },
];

const WIRES = [
  'M363 262.500H367Q369.500 262.500 369.500 270C370 290 380 298.500 405 298.500H501',
  'M363 251.300H368Q371.500 251.300 371.500 257V370C371.500 440 410 481 455 481H502',
  'M363 319.300H369Q374.500 319.500 374.500 326C374.500 420 382 505 400 563C420 630 465 690 530 719C610 752 700 758.300 800 758.300H1269',
  'M589 231.200H595Q600 231 600.500 238C602 280 612 303 665 303H737',
  'M589 231.200H593Q597.500 231 597.500 237C597.500 300 600 330 604 358C614 420 640 490 693 530C745 566 830 575.500 900 575.500H1486',
  'M590 413.700H594Q600.500 413 601 404V345C602 310 620 292 665 292H737',
  'M590 413.700H594Q598.500 414 598.500 420V460C599 560 606 635 630.700 698C665 785 740 858 860 890C925 907 1000 908.300 1080 908.300H1487',
  'M240 785.500Q245.500 785.500 245.500 779V600C245.500 520 254 455 276 415C298 380 350 359 470 358.700H905',
  'M377 693.300Q382.500 693 382.700 686V650C382.700 620 392 608.300 415 608.300H546',
  'M381 885.500Q386.500 885.500 386.500 878V750C386.500 690 410 653.500 465 653.500H546',
  'M634.500 586H639Q642.500 586 642.700 578V530C642.700 470 660 446.500 715 446.500H1245',
  'M634.500 586H640Q645.500 586 645.700 594C646 680 655 720 671.700 751.700C700 800 755 826.500 860 826.500H914',
  'M825 247H828Q831 247 831 253V340C832 385 845 404 890 404H905',
  'M993 302.500H998Q1001 303 1001 309C1001 400 1018 422 1040 435C1070 455 1090 458 1130 458H1245',
  'M993 302.500H1000Q1003.700 303 1003.700 309V520C1003.500 555 995 573 960 575.300C915 577 903.500 590 903.300 625V842Q903.300 849 910 849H914',
  'M1003 815.500H1006Q1010.700 815 1010.700 809V640C1010.700 480 1060 413 1225 413H1245',
  'M1332 345.300H1336Q1340.500 345.500 1340.500 352V510C1340 545 1330 561 1300 563C1270 565 1261 575 1261 610V774Q1261 781 1269 781',
  'M1357 713.300H1361Q1365 713 1365.500 705C1365.500 640 1372 610 1425 610H1486',
  'M1357 713.300H1366Q1370.700 714 1370.700 720V820C1372 900 1395 942.300 1470 942.300H1487',
  'M1574 519.500H1580Q1584.500 519.500 1584.500 514.500T1590 509.500H1670',
  'M1765 600Q1771.500 600 1771.500 594V576C1771 558 1764 554.500 1750 554.500H1685C1669 554 1663 545 1663 530V516Q1663 510 1669 509.500',
  'M1575 852.500Q1580.500 852 1580.500 845V690C1580.500 630 1600 600.500 1650 600.500H1676',
];

// x, y, rotation in degrees (0 points right)
const ARROWS = [
  [452, 298.500, 0], [371.500, 307, 90], [1038.400, 758.300, 0], [1212, 575.500, 0], [1287, 908.300, 0],
  [245.500, 675.300, -90], [682, 358.700, 0], [486, 608.300, 0], [386.500, 823.700, -90], [979, 446.500, 0],
  [1199, 458, 0], [1003.700, 419.700, 90], [903.300, 735.300, 90], [1010.700, 710, -90],
  [1340.500, 438, 90], [1261, 691.300, 90], [1370.700, 778.300, 90], [1580.500, 769, -90],
];

const ORIGIN = { x: 8, y: 102 };
const STEP = 21.460;

let grid = '';
for (let x = 18.500; x < 1914; x += STEP) grid += `M${Math.floor(x) + 0.5} 102V1034`;
for (let y = 113.500; y < 1034; y += STEP) grid += `M8 ${Math.floor(y) + 0.5}H1914`;

document.getElementById('wires').innerHTML =
  `<path class="grid-line" d="${grid}"/>` +
  WIRES.map(d => `<path class="wire" d="${d}"/>`).join('') +
  ARROWS.map(([x, y, a]) => `<path class="arrow" d="M-2.500 -2.800L3 0L-2.500 2.800z" transform="translate(${x} ${y}) rotate(${a})"/>`).join('');

const port = (color, side, big) => color === '.' ? '' : `<i class="port port-${side} c-${color}${big ? ' port-big' : ''}"></i>`;

function rowHtml(spec, i, rows) {
  const [kind, label, toggle, l, r] = spec.split(' ');
  const child = kind === 'O' || kind === 'I';
  const cls = ['row', kind.toLowerCase() === 'o' ? 'row-out' : 'row-in'];
  if (child) cls.push('row-child');
  if (child && rows[i - 1][0] !== kind) cls.push('row-first');
  const box = toggle === '.' ? '' : `<i class="box${toggle === '+' ? ' box-plus' : ''}"></i>`;
  return `<div class="${cls.join(' ')}">${label.replace(/_/g, ' ')}${box}${port(l, 'l')}${port(r, 'r')}</div>`;
}

for (const n of NODES) {
  const el = document.createElement('article');
  el.className = `node node-${n.kind}${n.selected ? ' node-selected' : ''}`;
  el.style.left = `${n.x - ORIGIN.x}px`;
  el.style.top = `${n.y - ORIGIN.y}px`;
  const body = n.rows ? `<div class="node-field"></div><div class="rows">${n.rows.map(rowHtml).join('')}</div>` : '';
  el.innerHTML = `<div class="node-title">${n.title}</div>
    <div class="node-head"><svg class="node-icon"><use href="#n-${n.icon}"/></svg><svg class="node-bars"><use href="#n-bars"/></svg>${port(n.l, 'l', true)}${port(n.r, 'r', true)}</div>${body}`;
  document.getElementById('canvas').append(el);
}
```
